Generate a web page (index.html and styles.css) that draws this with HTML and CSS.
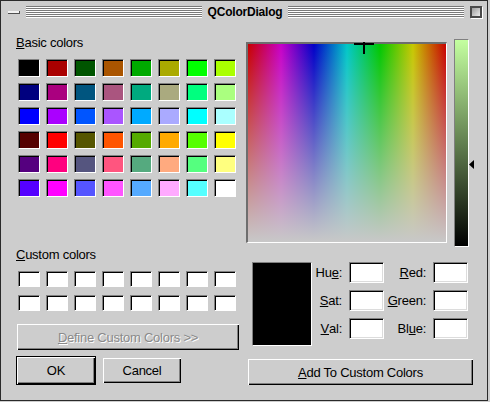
FILE: index.html
```html
<!DOCTYPE html>
<html>
<head>
<meta charset="utf-8">
<title>QColorDialog</title>
<link rel="stylesheet" href="styles.css">
</head>
<body>
<div class="window">
  <div class="titlebar">
    <span class="tb-min"></span>
    <span class="stripes"></span>
    <span class="title">QColorDialog</span>
    <span class="stripes"></span>
    <span class="tb-close"></span>
  </div>
  <div class="main">
    <div class="left">
      <div class="label"><u>B</u>asic colors</div>
      <div class="basic-grid">
        <span class="cell" style="background:#000000"></span>
        <span class="cell" style="background:#aa0000"></span>
        <span class="cell" style="background:#005500"></span>
        <span class="cell" style="background:#aa5500"></span>
        <span class="cell" style="background:#00aa00"></span>
        <span class="cell" style="background:#aaaa00"></span>
        <span class="cell" style="background:#00ff00"></span>
        <span class="cell" style="background:#aaff00"></span>

        <span class="cell" style="background:#00007f"></span>
        <span class="cell" style="background:#aa007f"></span>
        <span class="cell" style="background:#00557f"></span>
        <span class="cell" style="background:#aa557f"></span>
        <span class="cell" style="background:#00aa7f"></span>
        <span class="cell" style="background:#aaaa7f"></span>
        <span class="cell" style="background:#00ff7f"></span>
        <span class="cell" style="background:#aaff7f"></span>

        <span class="cell" style="background:#0000ff"></span>
        <span class="cell" style="background:#aa00ff"></span>
        <span class="cell" style="background:#0055ff"></span>
        <span class="cell" style="background:#aa55ff"></span>
        <span class="cell" style="background:#00aaff"></span>
        <span class="cell" style="background:#aaaaff"></span>
        <span class="cell" style="background:#00ffff"></span>
        <span class="cell" style="background:#aaffff"></span>

        <span class="cell" style="background:#550000"></span>
        <span class="cell" style="background:#ff0000"></span>
        <span class="cell" style="background:#555500"></span>
        <span class="cell" style="background:#ff5500"></span>
        <span class="cell" style="background:#55aa00"></span>
        <span class="cell" style="background:#ffaa00"></span>
        <span class="cell" style="background:#55ff00"></span>
        <span class="cell" style="background:#ffff00"></span>

        <span class="cell" style="background:#55007f"></span>
        <span class="cell" style="background:#ff007f"></span>
        <span class="cell" style="background:#55557f"></span>
        <span class="cell" style="background:#ff557f"></span>
        <span class="cell" style="background:#55aa7f"></span>
        <span class="cell" style="background:#ffaa7f"></span>
        <span class="cell" style="background:#55ff7f"></span>
        <span class="cell" style="background:#ffff7f"></span>

        <span class="cell" style="background:#5500ff"></span>
        <span class="cell" style="background:#ff00ff"></span>
        <span class="cell" style="background:#5555ff"></span>
        <span class="cell" style="background:#ff55ff"></span>
        <span class="cell" style="background:#55aaff"></span>
        <span class="cell" style="background:#ffaaff"></span>
        <span class="cell" style="background:#55ffff"></span>
        <span class="cell" style="background:#ffffff"></span>
      </div>

      <div class="label custom-label"><u>C</u>ustom colors</div>
      <div class="custom-grid">
        <span class="cell empty"></span><span class="cell empty"></span><span class="cell empty"></span><span class="cell empty"></span>
        <span class="cell empty"></span><span class="cell empty"></span><span class="cell empty"></span><span class="cell empty"></span>
        <span class="cell empty"></span><span class="cell empty"></span><span class="cell empty"></span><span class="cell empty"></span>
        <span class="cell empty"></span><span class="cell empty"></span><span class="cell empty"></span><span class="cell empty"></span>
      </div>

      <button class="btn define" disabled><u>D</u>efine Custom Colors &gt;&gt;</button>

      <div class="btn-row">
        <button class="btn ok">OK</button>
        <button class="btn cancel">Cancel</button>
      </div>
    </div>

    <div class="right">
      <div class="picker-row">
        <div class="picker">
          <span class="cross-h"></span>
          <span class="cross-v"></span>
        </div>
        <div class="lum-wrap">
          <div class="lum"></div>
          <svg class="lum-arrow" width="5" height="9" viewBox="0 0 5 9"><polygon points="5,0 5,9 0,4.5" fill="#000"/></svg>
        </div>
      </div>

      <div class="values">
        <div class="preview"></div>
        <div class="fields">
          <span class="flabel">Hu<u>e</u>:</span><span class="field"></span>
          <span class="flabel"><u>R</u>ed:</span><span class="field"></span>
          <span class="flabel"><u>S</u>at:</span><span class="field"></span>
          <span class="flabel"><u>G</u>reen:</span><span class="field"></span>
          <span class="flabel"><u>V</u>al:</span><span class="field"></span>
          <span class="flabel">Bl<u>u</u>e:</span><span class="field"></span>
        </div>
      </div>

      <button class="btn add"><u>A</u>dd To Custom Colors</button>
    </div>
  </div>
</div>
</body>
</html>
```

FILE: styles.css
```css
* {
  box-sizing: border-box;
}

html, body {
  margin: 0;
  padding: 0;
}

body {
  width: 490px;
  height: 402px;
  overflow: hidden;
  background: #cdcdcd;
  font-family: "Liberation Sans", Arial, sans-serif;
  font-size: 13px;
  letter-spacing: -0.25px;
  color: #000;
}

u {
  text-decoration: underline;
  text-underline-offset: 1px;
}

.window {
  width: 488px;
  height: 401px;
  border: 1px solid #2a2a2a;
  display: flex;
  flex-direction: column;
}

/* ---------- title bar ---------- */
.titlebar {
  height: 22px;
  display: flex;
  align-items: center;
  gap: 6px;
  padding: 0 5px 0 7px;
}

.tb-min {
  width: 12px;
  height: 3px;
  background: #f2f2f2;
  border-right: 1px solid #505050;
  border-bottom: 1px solid #505050;
  flex: none;
}

.stripes {
  flex: 1;
  height: 12px;
  background: repeating-linear-gradient(to bottom, #7a7a7a 0 1px, #ffffff 1px 2px);
}

.title {
  font-weight: bold;
  font-size: 12px;
  letter-spacing: -0.2px;
  line-height: 12px;
  flex: none;
}

.tb-close {
  width: 12px;
  height: 12px;
  flex: none;
  border: 2px solid #4a4a4a;
  background: linear-gradient(135deg, #9c9c9c, #ececec);
  box-shadow: 1px 1px 0 #ffffff;
}

/* ---------- main ---------- */
.main {
  display: flex;
  gap: 6px;
  padding: 13px 0 0 15px;
}

.left {
  width: 224px;
  display: flex;
  flex-direction: column;
}

.label {
  height: 14px;
  line-height: 14px;
}

.basic-grid {
  margin: 9px 0 0 2px;
  display: grid;
  grid-template-columns: repeat(8, 22px);
  grid-auto-rows: 18px;
  column-gap: 6px;
  row-gap: 6px;
}

.cell {
  display: block;
  border: 1px solid;
  border-color: #808080 #ffffff #ffffff #808080;
  box-shadow: inset 1px 1px 0 #000000;
}

.cell.empty {
  background: #ffffff;
}

.custom-label {
  margin-top: 51px;
}

.custom-grid {
  margin: 9px 0 0 2px;
  display: grid;
  grid-template-columns: repeat(8, 22px);
  grid-auto-rows: 16px;
  column-gap: 6px;
  row-gap: 8px;
}

.btn {
  font: inherit;
  letter-spacing: inherit;
  color: #000;
  background: #cdcdcd;
  border: none;
  padding: 0;
  margin: 0;
  box-shadow: inset 1px 1px 0 #ffffff, inset -1px -1px 0 #000000, inset -2px -2px 0 #808080;
}

.define {
  margin: 13px 0 0 1px;
  width: 222px;
  height: 26px;
  color: #8a8a8a;
  text-shadow: 1px 1px 0 #ffffff;
}

.btn-row {
  margin-top: 6px;
  display: flex;
  align-items: center;
  gap: 7px;
}

.ok {
  width: 80px;
  height: 29px;
  border: 1px solid #000;
}

.cancel {
  width: 78px;
  height: 25px;
}

/* ---------- right ---------- */
.right {
  width: 228px;
  display: flex;
  flex-direction: column;
}

.picker-row {
  margin-top: 3px;
  display: flex;
  align-items: flex-start;
}

.picker {
  position: relative;
  margin-top: 3px;
  width: 201px;
  height: 201px;
  border-style: solid;
  border-width: 2px 1px 1px 2px;
  border-color: #6e6e6e #ffffff #ffffff #6e6e6e;
  background:
    linear-gradient(to bottom, rgba(200, 200, 200, 0), #c8c8c8),
    linear-gradient(to right, #c80000, #c800c8 16.667%, #0000c8 33.333%, #00c8c8 50%, #00c800 66.667%, #c8c800 83.333%, #c80000);
}

.cross-h {
  position: absolute;
  left: 106px;
  top: -1px;
  width: 20px;
  height: 2px;
  background: #000;
}

.cross-v {
  position: absolute;
  left: 115px;
  top: -2px;
  width: 2px;
  height: 12px;
  background: #000;
}

.lum-wrap {
  position: relative;
  margin-left: 7px;
  width: 15px;
  height: 208px;
}

.lum {
  width: 15px;
  height: 208px;
  border: 1px solid;
  border-color: #808080 #ffffff #ffffff #808080;
  background: linear-gradient(to bottom, #c4ffa0, #000000);
}

.lum-arrow {
  position: absolute;
  left: 15px;
  top: 121px;
  display: block;
}

.values {
  margin-top: 15px;
  display: flex;
  align-items: flex-start;
}

.preview {
  margin-left: 6px;
  width: 60px;
  height: 84px;
  background: #000;
  border: 1px solid;
  border-color: #808080 #ffffff #ffffff #808080;
}

.fields {
  margin-left: 6px;
  display: grid;
  grid-template-columns: 25px 35px 37px 35px;
  grid-template-rows: 21px 21px 21px;
  column-gap: 6px;
  row-gap: 7px;
}

.flabel {
  display: flex;
  align-items: center;
  justify-content: flex-end;
  white-space: nowrap;
  padding-right: 1px;
}

.field {
  display: block;
  background: #fff;
  border: 1px solid;
  border-color: #808080 #ffffff #ffffff #808080;
  box-shadow: inset 1px 1px 0 #000000, inset -1px -1px 0 #dcdcdc;
}

.add {
  margin: 13px 0 0 2px;
  width: 225px;
  height: 26px;
}
```
